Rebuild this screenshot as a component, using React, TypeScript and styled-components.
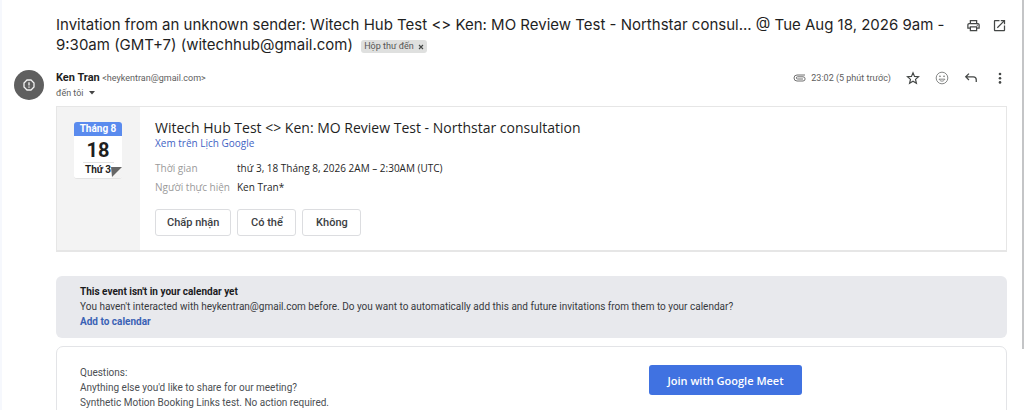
import React from "react";
import styled, { createGlobalStyle } from "styled-components";

const displayFont = `"Open Sans", "Noto Sans", Roboto, sans-serif`;
const subjectFont = `Inter, Roboto, "Liberation Sans", sans-serif`;

const GlobalStyle = createGlobalStyle`
  * { box-sizing: border-box; }
  html, body { margin: 0; height: 100%; background: #fff; }
  #root { height: 100%; }
  body { font-family: Roboto, "Noto Sans", "Liberation Sans", sans-serif; color: #1f1f1f; overflow: hidden; }
  h1, h2, p, dl, dd, dt { margin: 0; font-weight: 400; }
  a { text-decoration: none; }
  button { font-family: inherit; margin: 0; cursor: pointer; }
`;

const Page = styled.div`
  display: flex;
  height: 100vh;
  overflow: hidden;
`;

const Edge = styled.div`
  flex: none;
  width: 2px;
  background: #f6f8fd;
`;

const ScrollThumb = styled.div`
  flex: none;
  width: 2px;
  height: 85%;
  background: #c4c5c7;
`;

const Message = styled.main`
  flex: 1;
  min-width: 0;
  padding: 15px 15px 0 12px;
`;

const SubjectRow = styled.header`
  display: flex;
  align-items: flex-start;
  justify-content: space-between;
  gap: 12px;
  padding-left: 42px;
`;

const Subject = styled.h1`
  flex: 1;
  font-family: ${subjectFont};
  font-size: 15px;
  line-height: 20px;
`;

const Label = styled.span`
  display: inline-flex;
  align-items: center;
  gap: 4px;
  height: 13px;
  margin-left: 4px;
  padding: 0 3px;
  border-radius: 3px;
  background: #dfe0df;
  color: #555;
  font-family: Roboto, "Noto Sans", sans-serif;
  font-size: 9px;
  line-height: 13px;
  vertical-align: 1px;
`;

const IconButton = styled.button`
  display: flex;
  padding: 0;
  border: 0;
  background: none;
  color: ${(p) => p.color || "#444746"};
`;

const SubjectActions = styled.div`
  display: flex;
  gap: 11px;
  padding-top: 3px;
`;

const SenderRow = styled.section`
  display: flex;
  align-items: flex-start;
  gap: 12px;
  padding-top: 15px;
`;

const Avatar = styled.div`
  display: flex;
  align-items: center;
  justify-content: center;
  flex: none;
  width: 30px;
  height: 30px;
  border-radius: 50%;
  background: #5f5f5f;
`;

const Sender = styled.div`
  flex: 1;
  line-height: 15px;
  font-size: 10px;
  color: #5e5e5e;
`;

const Name = styled.strong`
  font-size: 11px;
  font-weight: 700;
  color: #1f1f1f;
`;

const Address = styled.span`
  font-size: 9px;
`;

const Recipient = styled.button`
  display: flex;
  align-items: center;
  gap: 5px;
  padding: 0;
  border: 0;
  background: none;
  font-size: 9px;
  line-height: 14px;
  color: #5e5e5e;
`;

const Meta = styled.div`
  display: flex;
  align-items: center;
  height: 16px;
  gap: 15px;
`;

const Time = styled.span`
  display: flex;
  align-items: center;
  gap: 5px;
  font-size: 9px;
  color: #5e5e5e;
`;

const Body = styled.div`
  padding-left: 42px;
`;

const EventCard = styled.section`
  display: flex;
  height: 146px;
  margin-top: 6px;
  border: 1px solid #e6e6e6;
  border-bottom-width: 2px;
`;

const DateColumn = styled.div`
  flex: none;
  width: 83px;
  padding: 15px 18px 15px 17px;
  background: #f3f3f3;
`;

const DateTile = styled.div`
  position: relative;
  display: flex;
  flex-direction: column;
  align-items: center;
  height: 57px;
  border-radius: 3px;
  background: #fff;
  border-bottom: 1px solid #e3e3e3;
  overflow: hidden;
`;

const Month = styled.div`
  width: 100%;
  height: 14px;
  background: #5a8bee;
  color: #fff;
  font-size: 10px;
  font-weight: 700;
  line-height: 14px;
  text-align: center;
`;

const Day = styled.div`
  width: 31px;
  height: 27px;
  border-bottom: 1px solid #e2e2e2;
  font-size: 20px;
  font-weight: 700;
  line-height: 29px;
  text-align: center;
`;

const Weekday = styled.div`
  font-size: 10px;
  font-weight: 700;
  line-height: 14px;
`;

const Fold = styled.svg`
  position: absolute;
  right: 0;
  bottom: 0;
`;

const EventDetails = styled.div`
  padding: 12px 15px 0;
`;

const EventTitle = styled.h2`
  font-family: ${displayFont};
  font-size: 14px;
  line-height: 18px;
`;

const CalendarLink = styled.a`
  display: block;
  font-family: ${displayFont};
  font-size: 10px;
  line-height: 12px;
  color: #3f63c4;
`;

const Facts = styled.dl`
  display: grid;
  grid-template-columns: 78px auto;
  column-gap: 4px;
  margin-top: 10px;
  font-family: ${displayFont};
  font-size: 10px;
  line-height: 19px;
`;

const FactName = styled.dt`
  color: #9a9a9a;
  white-space: nowrap;
`;

const Replies = styled.div`
  display: flex;
  gap: 6px;
  margin-top: 12px;
`;

const ReplyButton = styled.button`
  height: 27px;
  min-width: 59px;
  padding: 0 11px;
  border: 1px solid #dcdde0;
  border-radius: 3px;
  background: #fff;
  color: #3c4043;
  font-size: 11px;
  font-weight: 500;
`;

const Notice = styled.section`
  margin-top: 24px;
  padding: 8px 24px 9px;
  border-radius: 6px;
  background: #e8e9ed;
  color: #37393d;
  font-size: 10px;
  line-height: 15px;
`;

const NoticeTitle = styled.h2`
  font-size: 10px;
  font-weight: 700;
  line-height: 15px;
  color: #1b1b1d;
`;

const AddLink = styled.a`
  font-weight: 700;
  color: #3a62b5;
`;

const Details = styled.section`
  display: grid;
  grid-template-columns: 569px auto;
  justify-content: start;
  align-items: start;
  height: 120px;
  margin-top: 8px;
  padding: 18px 23px;
  border: 1px solid #e3e4e7;
  border-radius: 7px;
  color: #4c4f53;
  font-size: 10px;
  line-height: 15px;
`;

const JoinButton = styled.button`
  width: 153px;
  height: 30px;
  padding: 0;
  border: 0;
  border-radius: 3px;
  background: #4072e1;
  color: #fff;
  font-family: ${displayFont};
  font-size: 11px;
  font-weight: 600;
`;

export default function App() {
  return (
    <>
      <GlobalStyle />
      <Page>
        <Edge />
        <Message>
          <SubjectRow>
            <Subject>
              Invitation from an unknown sender: Witech Hub Test &lt;&gt; Ken: MO Review Test - Northstar consul... @ Tue Aug 18, 2026 9am - <br />9:30am (GMT+7) (witechhub@gmail.com){" "}
              <Label>
                Hộp thư đến
                <IconButton aria-label="Remove label">
                  <svg width="6" height="6" viewBox="0 0 6 6" stroke="currentColor" strokeWidth="1.1"><path d="M1 1l4 4M5 1L1 5" /></svg>
                </IconButton>
              </Label>
            </Subject>
            <SubjectActions>
              <IconButton aria-label="Print">
                <svg width="15" height="15" viewBox="0 0 24 24" fill="currentColor"><path d="M19 8h-1V3H6v5H5c-1.700 0-3 1.300-3 3v6h4v4h12v-4h4v-6c0-1.700-1.300-3-3-3zM8 5h8v3H8V5zm8 14H8v-4h8v4zm2-4v-2H6v2H4v-4c0-.6.4-1 1-1h14c.6 0 1 .4 1 1v4h-2z" /><circle cx="18" cy="11.500" r="1" /></svg>
              </IconButton>
              <IconButton aria-label="Open in new window">
                <svg width="15" height="15" viewBox="0 0 24 24" fill="currentColor"><path d="M19 19H5V5h7V3H5c-1.100 0-2 .9-2 2v14c0 1.100.9 2 2 2h14c1.100 0 2-.9 2-2v-7h-2v7zM14 3v2h3.600l-9.800 9.800 1.400 1.400L19 6.400V10h2V3h-7z" /></svg>
              </IconButton>
            </SubjectActions>
          </SubjectRow>

          <SenderRow>
            <Avatar>
              <svg width="12" height="12" viewBox="0 0 12 12" fill="none" stroke="#f1f1f1" strokeWidth="1.300"><path d="M4 1h4l3 3v4l-3 3H4L1 8V4z" /><path d="M6 3.300v3.200M6 7.500v1.200" /></svg>
            </Avatar>
            <Sender>
              <Name>Ken Tran</Name> <Address>&lt;heykentran@gmail.com&gt;</Address>
              <Recipient>
                đến tôi
                <svg width="6" height="4" viewBox="0 0 6 4" fill="#444"><path d="M0 0h6L3 3.500z" /></svg>
              </Recipient>
            </Sender>
            <Meta>
              <Time>
                <svg width="13" height="8" viewBox="0 0 13 8" fill="none" stroke="#707070" strokeWidth="1"><path d="M12 1H4a3 3 0 0 0 0 6h6a2 2 0 0 0 0-4.200H4.500a1 1 0 0 0 0 2.200H10" /></svg>
                23:02 (5 phút trước)
              </Time>
              <IconButton aria-label="Star">
                <svg width="14" height="14" viewBox="0 0 24 24" fill="none" stroke="currentColor" strokeWidth="2"><path d="M12 3l2.600 6.300 6.900.6-5.200 4.500 1.600 6.700L12 17.500l-5.900 3.600 1.600-6.700-5.200-4.500 6.900-.6z" /></svg>
              </IconButton>
              <IconButton aria-label="Add reaction" color="#858786">
                <svg width="14" height="14" viewBox="0 0 24 24" fill="none" stroke="currentColor" strokeWidth="1.700"><circle cx="12" cy="12" r="10" /><path d="M7 14c2 4.500 8 4.500 10 0z" /><circle cx="8.500" cy="9" r=".8" fill="currentColor" /><circle cx="15.500" cy="9" r=".8" fill="currentColor" /></svg>
              </IconButton>
              <IconButton aria-label="Reply">
                <svg width="14" height="14" viewBox="0 0 24 24" fill="none" stroke="currentColor" strokeWidth="2.200"><path d="M8.500 4.500L3 10l5.500 5.500M3 10h13c3 0 5 2 5 5v4" /></svg>
              </IconButton>
              <IconButton aria-label="More">
                <svg width="14" height="14" viewBox="0 0 14 14" fill="currentColor"><circle cx="7" cy="3" r="1.300" /><circle cx="7" cy="7.200" r="1.300" /><circle cx="7" cy="11.400" r="1.300" /></svg>
              </IconButton>
            </Meta>
          </SenderRow>

          <Body>
            <EventCard>
              <DateColumn>
                <DateTile>
                  <Month>Tháng 8</Month>
                  <Day>18</Day>
                  <Weekday>Thứ 3</Weekday>
                  <Fold width="11" height="11" viewBox="0 0 11 11"><path d="M0 11L11 0v11z" fill="#f3f3f3" /><path d="M0 0h11L1 10z" fill="#666" /></Fold>
                </DateTile>
              </DateColumn>
              <EventDetails>
                <EventTitle>Witech Hub Test &lt;&gt; Ken: MO Review Test - Northstar consultation</EventTitle>
                <CalendarLink href="#calendar">Xem trên Lịch Google</CalendarLink>
                <Facts>
                  <FactName>Thời gian</FactName>
                  <dd>thứ 3, 18 Tháng 8, 2026 2AM – 2:30AM (UTC)</dd>
                  <FactName>Người thực hiện</FactName>
                  <dd>Ken Tran*</dd>
                </Facts>
                <Replies>
                  <ReplyButton>Chấp nhận</ReplyButton>
                  <ReplyButton>Có thể</ReplyButton>
                  <ReplyButton>Không</ReplyButton>
                </Replies>
              </EventDetails>
            </EventCard>

            <Notice>
              <NoticeTitle>This event isn't in your calendar yet</NoticeTitle>
              <p>You haven't interacted with heykentran@gmail.com before. Do you want to automatically add this and future invitations from them to your calendar?</p>
              <AddLink href="#add">Add to calendar</AddLink>
            </Notice>

            <Details>
              <div>
                <p>Questions:</p>
                <p>Anything else you'd like to share for our meeting?</p>
                <p>Synthetic Motion Booking Links test. No action required.</p>
              </div>
              <JoinButton>Join with Google Meet</JoinButton>
            </Details>
          </Body>
        </Message>
        <ScrollThumb />
      </Page>
    </>
  );
}
